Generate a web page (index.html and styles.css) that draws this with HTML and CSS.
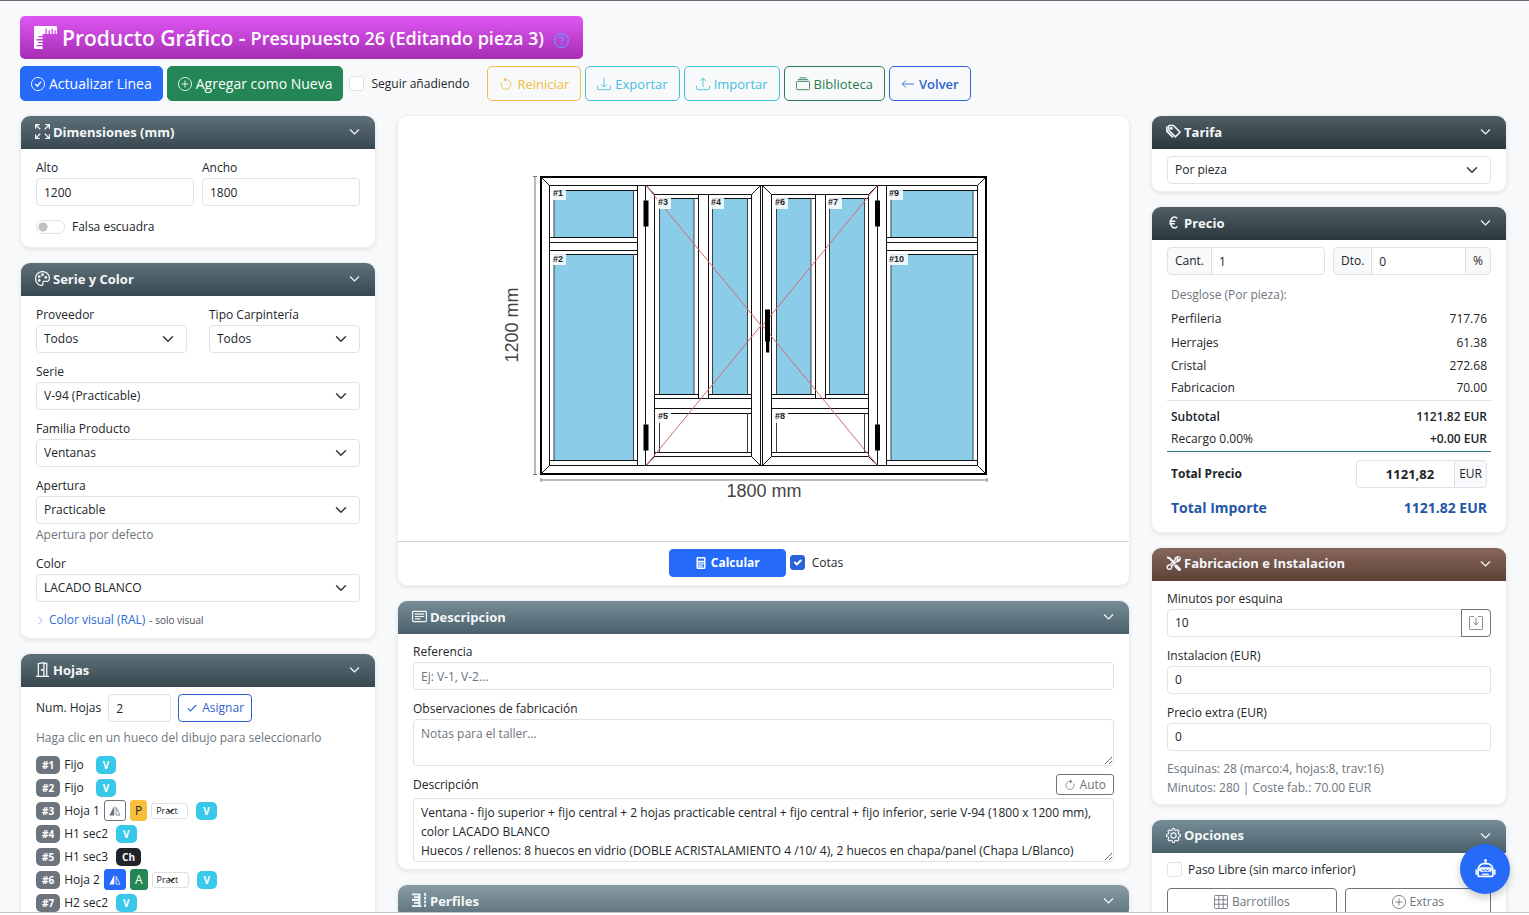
FILE: index.html
```html
<!DOCTYPE html>
<html lang="es">
<head>
<meta charset="utf-8">
<meta name="viewport" content="width=device-width, initial-scale=1">
<title>Producto Gráfico</title>
<link rel="stylesheet" href="styles.css">
</head>
<body>
<svg class="defs" aria-hidden="true">
  <symbol id="check-circle" viewBox="0 0 16 16"><circle cx="8" cy="8" r="7.5"/><path d="M5 8l2.3 2.5L11.4 5.400" stroke-width="1.500"/></symbol>
  <symbol id="plus-circle" viewBox="0 0 16 16"><circle cx="8" cy="8" r="7.500"/><path d="M8 4v8M4 8h8"/></symbol>
  <symbol id="question" viewBox="0 0 16 16"><circle cx="8" cy="8" r="7.400" stroke-width="1.300"/><path d="M5.800 6.200c0-1.500 1-2.100 2.200-2.100s2.200.7 2.200 2c0 1.600-2.100 1.700-2.100 3.600" stroke-width="1.500"/><circle class="solid" cx="8.100" cy="11.700" r=".95"/></symbol>
  <symbol id="reset" viewBox="0 0 16 16"><path d="M8 3a5.500 5.500 0 1 1-4.900 3"/><path class="solid" d="M8 .5v5L5 3z"/></symbol>
  <symbol id="refresh" viewBox="0 0 16 16"><path d="M8 3a5.500 5.500 0 1 0 4.900 3"/><path class="solid" d="M8 .5v5L11 3z"/></symbol>
  <symbol id="download" viewBox="0 0 16 16"><path d="M.5 10v2.500a2 2 0 0 0 2 2h11a2 2 0 0 0 2-2V10M8 1v10.500M4.800 8.400L8 11.500l3.200-3.100"/></symbol>
  <symbol id="upload" viewBox="0 0 16 16"><path d="M.5 10v2.500a2 2 0 0 0 2 2h11a2 2 0 0 0 2-2V10M8 11.500V1.300M4.800 4.500L8 1.300l3.200 3.200"/></symbol>
  <symbol id="library" viewBox="0 0 16 16"><rect x=".5" y="5" width="15" height="9.500" rx="1.200"/><path d="M2 3h12M4 1h8"/></symbol>
  <symbol id="arrow-left" viewBox="0 0 16 16"><path d="M15 8H1.500M5.500 4l-4 4 4 4"/></symbol>
  <symbol id="chevron" viewBox="0 0 16 16"><path d="M1.500 5L8 11.500 14.500 5" stroke-width="1.800"/></symbol>
  <symbol id="chevron-right" viewBox="0 0 16 16"><path d="M5 2l6 6-6 6"/></symbol>
  <symbol id="check" viewBox="0 0 16 16"><path d="M2.500 8.500l3.500 3.500L13.500 4" stroke-width="1.500"/></symbol>
  <symbol id="rulers" viewBox="0 0 16 16"><path class="solid" d="M1 0h14a1 1 0 0 1 1 1v4.500h-.9V3h-.9v2.500h-1.100V1.800h-.9v3.700h-1.200V3h-.9v2.500H8.900V1.800H8v3.700H6V7H3v.9h3v1.200H1.800v.9H6v1.100H3v.9h3v1.200H1.800v.9H6V16H1a1 1 0 0 1-1-1V1a1 1 0 0 1 1-1z"/></symbol>
  <symbol id="expand" viewBox="0 0 16 16"><path d="M.6 5V.6H5M11 .6h4.400V5M15.400 11v4.400H11M5 15.400H.6V11M.6.6l5 5M15.400.6l-5 5M15.400 15.400l-5-5M.6 15.400l5-5" stroke-width="1.300"/></symbol>
  <symbol id="palette" viewBox="0 0 16 16"><path d="M8 .6C3.800.6.6 3.700.6 7.800S3.400 15.400 6.700 15.400c2.700 0 1-2.600 2-4 1.100-1.500 3.100.2 5-.5 1.100-.4 1.700-1.500 1.700-3.100C15.400 3.700 12.200.6 8 .6z" stroke-width="1.300"/><g class="solid"><circle cx="8" cy="4" r="1.500"/><circle cx="4.500" cy="6" r="1.500"/><circle cx="4.500" cy="10" r="1.500"/><circle cx="11.600" cy="6.800" r="1.500"/></g></symbol>
  <symbol id="door" viewBox="0 0 16 16"><path d="M1 15.400h14M3.600 15V1.700L9.500.7V15M9.500 1.500h3V15" stroke-width="1.400"/><circle class="solid" cx="7.400" cy="8.500" r="1.200"/></symbol>
  <symbol id="calc" viewBox="0 0 16 16"><path class="solid" fill-rule="evenodd" d="M3.500 0h9A1.500 1.500 0 0 1 14 1.500v13a1.500 1.500 0 0 1-1.500 1.500h-9A1.500 1.500 0 0 1 2 14.500v-13A1.500 1.500 0 0 1 3.500 0zM4 2v3h8V2zM4 7v1.500h2V7zm3 0v1.500h2V7zm3 0v1.500h2V7zM4 9.700v1.500h2V9.700zm3 0v1.500h2V9.700zm3 0V14h2V9.700zM4 12.500V14h2v-1.500zm3 0V14h2v-1.500z"/></symbol>
  <symbol id="card-text" viewBox="0 0 16 16"><rect x=".6" y="2.600" width="14.800" height="10.800" rx="1" stroke-width="1.300"/><path d="M3 5.500h10M3 8h10M3 10.500h6" stroke-width="1.300"/></symbol>
  <symbol id="profiles" viewBox="0 0 16 16"><path d="M0 1.500h9M2 4.500h7M0 7.500h7M2 10.500h7M0 14h10M8 1v13" stroke-width="2"/><path d="M14 0v16" stroke-width="2" stroke-dasharray="3 1"/></symbol>
  <symbol id="tags" viewBox="0 0 16 16"><path d="M3 2.200v4.500l7 7 5-5-7-7H3.500z" stroke-width="1.600"/><path d="M1 2.500v5.300l6.500 6.500" stroke-width="1.800"/><circle class="solid" cx="5.700" cy="4.700" r="1.500"/></symbol>
  <symbol id="euro" viewBox="0 0 16 16"><path d="M12 3.800C11.200 2.700 10.200 2.200 9 2.200c-2.500 0-3.800 2.300-3.800 5.800s1.300 5.800 3.800 5.800c1.200 0 2.200-.5 3-1.600M3.500 6.700H10M3.500 9.300h5.800" stroke-width="1.700"/></symbol>
  <symbol id="tools" viewBox="0 0 16 16"><path d="M1.200 1.200l2.800 1.300 5 5.300" stroke-width="2.200"/><path d="M14.500 3.500l-2.300.8-.6-2 1.700-1.200c-2-.7-4 .9-3.500 3l-5.500 5.600c-2.300-.5-3.900 1.900-2.500 3.600 1.700 2 5 .3 4.100-2.300l5.500-5.300c2.200.6 3.900-1.100 3.700-3.200z" stroke-width="1.500"/><path d="M10.500 10.500l3.700 3.700" stroke-width="3.400" stroke-linecap="round"/></symbol>
  <symbol id="gear" viewBox="0 0 16 16"><path d="M6.600 2.200L7 .6h2l.4 1.600 1.500.6 1.500-.9 1.500 1.500-.9 1.500.6 1.500 1.800.6v2l-1.800.5-.6 1.500.9 1.500-1.500 1.500-1.500-.9-1.500.6-.4 1.700H7l-.4-1.700-1.500-.6-1.500.9-1.500-1.500.9-1.500-.6-1.500L.6 9V7l1.800-.6L3 4.900l-.9-1.500 1.500-1.500 1.500.9z" stroke-linejoin="round" stroke-width="1.200"/><circle cx="8" cy="8" r="2.800" stroke-width="1.200"/></symbol>
  <symbol id="save-in" viewBox="0 0 16 16"><path d="M5.500.5h-4a1 1 0 0 0-1 1v13a1 1 0 0 0 1 1h13a1 1 0 0 0 1-1v-13a1 1 0 0 0-1-1h-4M8 2v8M5 7.200l3 3 3-3"/></symbol>
  <symbol id="grid" viewBox="0 0 16 16"><rect x=".5" y=".5" width="15" height="15" rx="1"/><path d="M.5 5.500h15M.5 10.500h15M5.500.5v15M10.500.5v15"/></symbol>
  <symbol id="mirror" viewBox="0 0 16 16"><path class="solid" d="M7 1v13H.5z"/><path d="M9.500 3v10.500h5.200z"/></symbol>
  <symbol id="robot" viewBox="0 0 16 16"><path d="M8 1v2.500M1 8v4M15 8v4" stroke-width="1.300"/><circle class="solid" cx="8" cy="1" r="1"/><path d="M4.500 13.300H3.400a1 1 0 0 1-1-1V8A4.500 4.500 0 0 1 6.900 3.600h2.200A4.500 4.500 0 0 1 13.600 8v4.300a1 1 0 0 1-1 1H3.400" stroke-width="1.300"/><path class="solid" fill-rule="evenodd" d="M4.800 6.200h6.400a1.800 1.800 0 0 1 0 3.600H4.800a1.800 1.800 0 0 1 0-3.600zM5 7.400l1.500 1.200L8 7.600l1.500 1L11 7.400v.8L9.500 9.300 8 8.400l-1.500.9L5 8.200z"/><path d="M5.500 11.600h5" stroke-width="1"/></symbol>
</svg>

<main class="app">
  <h1 class="title"><svg class="icon title-icon"><use href="#rulers"/></svg><span>Producto Gráfico -</span><span class="subtitle">Presupuesto 26 (Editando pieza 3)</span><a class="help" href="#" aria-label="Ayuda"><svg class="icon"><use href="#question"/></svg></a></h1>

  <div class="toolbar">
    <button class="btn primary" type="button"><svg class="icon"><use href="#check-circle"/></svg>Actualizar Linea</button>
    <button class="btn success" type="button"><svg class="icon"><use href="#plus-circle"/></svg>Agregar como Nueva</button>
    <label class="check keep"><input type="checkbox">Seguir añadiendo</label>
    <button class="btn warning" type="button"><svg class="icon"><use href="#reset"/></svg>Reiniciar</button>
    <button class="btn info" type="button"><svg class="icon"><use href="#download"/></svg>Exportar</button>
    <button class="btn info" type="button"><svg class="icon"><use href="#upload"/></svg>Importar</button>
    <button class="btn outline-success" type="button"><svg class="icon"><use href="#library"/></svg>Biblioteca</button>
    <a class="btn back" href="#"><svg class="icon"><use href="#arrow-left"/></svg>Volver</a>
  </div>

  <div class="columns">
    <div class="column">
      <section class="card">
        <h2 class="card-head slate"><svg class="icon"><use href="#expand"/></svg>Dimensiones (mm)<svg class="icon toggle"><use href="#chevron"/></svg></h2>
        <div class="card-body roomy">
          <div class="pair">
            <div class="field"><label for="alto">Alto</label><input class="control" id="alto" value="1200"></div>
            <div class="field"><label for="ancho">Ancho</label><input class="control" id="ancho" value="1800"></div>
          </div>
          <label class="switch"><input type="checkbox" role="switch">Falsa escuadra</label>
        </div>
      </section>

      <section class="card">
        <h2 class="card-head slate"><svg class="icon"><use href="#palette"/></svg>Serie y Color<svg class="icon toggle"><use href="#chevron"/></svg></h2>
        <div class="card-body roomy">
          <div class="pair wide">
            <div class="field"><label for="prov">Proveedor</label><select class="control" id="prov"><option>Todos</option></select></div>
            <div class="field"><label for="tipo">Tipo Carpintería</label><select class="control" id="tipo"><option>Todos</option></select></div>
          </div>
          <div class="field"><label for="serie">Serie</label><select class="control" id="serie"><option>V-94 (Practicable)</option></select></div>
          <div class="field"><label for="familia">Familia Producto</label><select class="control" id="familia"><option>Ventanas</option></select></div>
          <div class="field"><label for="apertura">Apertura</label><select class="control" id="apertura"><option>Practicable</option></select><p class="muted hint">Apertura por defecto</p></div>
          <div class="field"><label for="color">Color</label><select class="control" id="color"><option>LACADO BLANCO</option></select></div>
          <p class="ral"><svg class="icon"><use href="#chevron-right"/></svg><a href="#">Color visual (RAL)</a><small>- solo visual</small></p>
        </div>
      </section>

      <section class="card">
        <h2 class="card-head slate"><svg class="icon"><use href="#door"/></svg>Hojas<svg class="icon toggle"><use href="#chevron"/></svg></h2>
        <div class="card-body leaves">
          <div class="assign"><label for="hojas">Num. Hojas</label><input class="control" id="hojas" value="2"><button class="btn small outline-primary" type="button"><svg class="icon"><use href="#check"/></svg>Asignar</button></div>
          <p class="muted">Haga clic en un hueco del dibujo para seleccionarlo</p>
          <ul class="leaf-list">
            <li><span class="badge">#1</span><span class="leaf-name">Fijo</span><span class="badge cyan">V</span></li>
            <li><span class="badge">#2</span><span class="leaf-name">Fijo</span><span class="badge cyan">V</span></li>
            <li><span class="badge">#3</span><span>Hoja 1</span><button class="mini" type="button" aria-label="Invertir hoja 1"><svg class="icon"><use href="#mirror"/></svg></button><button class="mini yellow" type="button">P</button><select class="mini-select" aria-label="Apertura hoja 1"><option>Pract</option></select><span class="badge cyan">V</span></li>
            <li><span class="badge">#4</span><span>H1 sec2</span><span class="badge cyan">V</span></li>
            <li><span class="badge">#5</span><span>H1 sec3</span><span class="badge black">Ch</span></li>
            <li><span class="badge">#6</span><span>Hoja 2</span><button class="mini blue" type="button" aria-label="Invertir hoja 2"><svg class="icon"><use href="#mirror"/></svg></button><button class="mini green" type="button">A</button><select class="mini-select" aria-label="Apertura hoja 2"><option>Pract</option></select><span class="badge cyan">V</span></li>
            <li><span class="badge">#7</span><span>H2 sec2</span><span class="badge cyan">V</span></li>
          </ul>
        </div>
      </section>
    </div>

    <div class="column middle">
      <section class="card viewer">
        <div class="canvas">
          <svg class="drawing" viewBox="500 155 528 347" role="img" aria-label="Ventana de 1800 por 1200 mm">
            <g class="glass">
              <path d="M554 190h79v47h-79zM554 254h79v206h-79zM659 198h35v196h-35zM712 198h35v196h-35zM776 198h35v196h-35zM829 198h35v196h-35zM891 190h82v47h-82zM891 254h82v206h-82z"/>
            </g>
            <path class="outer" d="M541 177h445v297H541z"/>
            <path class="line" d="M549.5 185.500h428v280h-428zM541 177l8.500 8.500M986 177l-8.500 8.500M541 474l8.500-8.500M986 474l-8.500-8.500"/>
            <path class="line" d="M637.500 185.500v280M645.500 185.500v280M877.500 185.500v280M886.500 185.500v280M760.500 185.500v280M762.500 185.500v280"/>
            <path class="line" d="M549.5 237.500h88M549.500 242.500h88M549.500 250.500h88M549.500 460.500h88M554 190.500h83M554 254.500h83M886.500 237.500h91M886.500 242.500h91M886.500 250.500h91M886.500 460.500h91M891 190.500h86M891 254.500h86"/>
            <path class="line" d="M654.500 194.500h97v262h-97zM646 185.500l8.500 9M760.500 185.500l-9 9M646 465.500l8.500-9M760.500 465.500l-9-9M771.500 194.500h97v262h-97zM762.500 185.500l9 9M877.500 185.500l-9 9M762.500 465.500l9-9M877.500 465.500l-9-9"/>
            <path class="line" d="M698.500 194.500v204M708.500 194.500v204M815.500 194.500v204M825.500 194.500v204M654.500 394.500h44M708.500 394.500h43M771.500 394.500h44M825.500 394.500h43M654.500 398.500h97M771.500 398.500h97M654.500 408.500h97M771.500 408.500h97M659.500 413.500h92M776.500 413.500h92M654.500 452.500h97M771.500 452.500h97M659 198.500h39M712 198.500h39M776 198.500h39M829 198.500h39"/>
            <path class="bead" d="M554 190v47M633.500 190v47M554 254v206M633.500 254v206M659.500 198v196M694 198v196M712.500 198v196M747.500 198v196M776.500 198v196M811 198v196M829.500 198v196M864.500 198v196M891 190v47M973 190v47M891 254v206M973 254v206M659.500 413v39M747.500 413v39M776.500 413v39M864.500 413v39"/>
            <path class="swing" d="M646 185.500l115 140-115 140M877.500 185.500l-115 140 115 140"/>
            <path class="metal" d="M643.500 200.500h5v26h-5zM643.500 424.500h5v26h-5zM875 200.500h5v26h-5zM875 424.500h5v26h-5zM765 309.500h5v32h-.7v11H766v-11h-1z"/>
            <g class="tag-bg"><path d="M552 188h14v12h-14zM552 253h14v12h-14zM657 197h14v12h-14zM710 197h14v12h-14zM657 411h14v12h-14zM774 197h14v12h-14zM828 197h14v12h-14zM774 411h14v12h-14zM889 188h14v12h-14zM889 253h19v12h-19z"/></g>
            <g class="tags"><text x="553" y="196">#1</text><text x="553" y="262">#2</text><text x="658" y="205">#3</text><text x="711" y="205">#4</text><text x="658" y="419">#5</text><text x="775" y="205">#6</text><text x="828" y="205">#7</text><text x="775" y="419">#8</text><text x="889" y="196">#9</text><text x="889" y="262">#10</text></g>
            <path class="dim" d="M535 177v297M533 176.500h4M533 474.500h4M541 480h446M541 478v4M987 478v4"/>
            <text class="dim-text" x="764" y="497">1800 mm</text>
            <text class="dim-text" transform="translate(518 325) rotate(-90)">1200 mm</text>
          </svg>
        </div>
        <div class="viewer-foot"><button class="btn small calc" type="button"><svg class="icon"><use href="#calc"/></svg>Calcular</button><label class="check"><input type="checkbox" checked>Cotas</label></div>
      </section>

      <section class="card">
        <h2 class="card-head steel"><svg class="icon"><use href="#card-text"/></svg>Descripcion<svg class="icon toggle"><use href="#chevron"/></svg></h2>
        <div class="card-body">
          <div class="field"><label for="ref">Referencia</label><input class="control" id="ref" placeholder="Ej: V-1, V-2..."></div>
          <div class="field"><label for="obs">Observaciones de fabricación</label><textarea class="control area" id="obs" rows="2" placeholder="Notas para el taller..."></textarea></div>
          <div class="field"><div class="label-row"><label for="desc">Descripción</label><button class="btn tiny" type="button"><svg class="icon"><use href="#refresh"/></svg>Auto</button></div><textarea class="control area tall" id="desc" rows="3">Ventana - fijo superior + fijo central + 2 hojas practicable central + fijo central + fijo inferior, serie V-94 (1800 x 1200 mm), color LACADO BLANCO
Huecos / rellenos: 8 huecos en vidrio (DOBLE ACRISTALAMIENTO 4 /10/ 4), 2 huecos en chapa/panel (Chapa L/Blanco)</textarea></div>
        </div>
      </section>

      <section class="card">
        <h2 class="card-head fog"><svg class="icon"><use href="#profiles"/></svg>Perfiles<svg class="icon toggle"><use href="#chevron"/></svg></h2>
      </section>
    </div>

    <div class="column">
      <section class="card">
        <h2 class="card-head ink"><svg class="icon"><use href="#tags"/></svg>Tarifa<svg class="icon toggle"><use href="#chevron"/></svg></h2>
        <div class="card-body"><select class="control" aria-label="Tarifa"><option>Por pieza</option></select></div>
      </section>

      <section class="card">
        <h2 class="card-head ink"><svg class="icon"><use href="#euro"/></svg>Precio<svg class="icon toggle"><use href="#chevron"/></svg></h2>
        <div class="card-body price">
          <div class="pair">
            <div class="group"><label class="addon" for="cant">Cant.</label><input class="control" id="cant" value="1"></div>
            <div class="group"><label class="addon" for="dto">Dto.</label><input class="control" id="dto" value="0"><span class="addon">%</span></div>
          </div>
          <table class="costs">
            <tbody>
              <tr class="muted lead"><td colspan="2">Desglose (Por pieza):</td></tr>
              <tr class="lead"><td>Perfileria</td><td>717.76</td></tr>
              <tr><td>Herrajes</td><td>61.38</td></tr>
              <tr><td>Cristal</td><td>272.68</td></tr>
              <tr><td>Fabricacion</td><td>70.00</td></tr>
            </tbody>
            <tbody class="sub">
              <tr><th scope="row">Subtotal</th><td>1121.82 EUR</td></tr>
              <tr><td>Recargo 0.00%</td><td>+0.00 EUR</td></tr>
            </tbody>
          </table>
          <div class="total"><label for="total">Total Precio</label><div class="group"><input class="control" id="total" value="1121,82"><span class="addon">EUR</span></div></div>
          <div class="grand"><span>Total Importe</span><span>1121.82 EUR</span></div>
        </div>
      </section>

      <section class="card">
        <h2 class="card-head brown"><svg class="icon"><use href="#tools"/></svg>Fabricacion e Instalacion<svg class="icon toggle"><use href="#chevron"/></svg></h2>
        <div class="card-body">
          <div class="field"><label for="min">Minutos por esquina</label><div class="group"><input class="control" id="min" value="10"><button class="addon-btn" type="button" aria-label="Guardar minutos"><svg class="icon"><use href="#save-in"/></svg></button></div></div>
          <div class="field"><label for="inst">Instalacion (EUR)</label><input class="control" id="inst" value="0"></div>
          <div class="field"><label for="extra">Precio extra (EUR)</label><input class="control" id="extra" value="0"></div>
          <p class="muted summary">Esquinas: 28 (marco:4, hojas:8, trav:16)<br>Minutos: 280 | Coste fab.: 70.00 EUR</p>
        </div>
      </section>

      <section class="card">
        <h2 class="card-head steel"><svg class="icon"><use href="#gear"/></svg>Opciones<svg class="icon toggle"><use href="#chevron"/></svg></h2>
        <div class="card-body">
          <label class="check options-check"><input type="checkbox">Paso Libre (sin marco inferior)</label>
          <div class="actions"><button class="btn small gray" type="button"><svg class="icon"><use href="#grid"/></svg>Barrotillos</button><button class="btn small gray" type="button"><svg class="icon"><use href="#plus-circle"/></svg>Extras</button></div>
        </div>
      </section>
    </div>
  </div>
</main>
<button class="chat" type="button" aria-label="Asistente"><svg class="icon"><use href="#robot"/></svg></button>
</body>
</html>
```
FILE: styles.css
```css
* { box-sizing: border-box; }

body {
  margin: 0;
  height: 100vh;
  overflow: hidden;
  background: #fff;
  color: #212529;
  font: 12px/20px "Open Sans", "Noto Sans", sans-serif;
}

h1, h2, p, ul { margin: 0; padding: 0; }
button, input, select, textarea { font: inherit; color: inherit; margin: 0; }
a { color: #2b6bd6; text-decoration: none; }

.defs { display: none; }

.icon {
  width: 14px;
  height: 14px;
  flex: none;
  fill: none;
  stroke: currentColor;
  overflow: visible;
}
.solid { fill: currentColor; stroke: none; }

.app {
  height: calc(100vh - 2px);
  overflow: hidden;
  padding: 15px 22px 0 20px;
  border-top: 1px solid #6c6b73;
  border-bottom: 1px solid #c4c6ca;
  background: #f8f9fb;
}

/* Page title */
.title {
  display: flex;
  align-items: center;
  gap: 5px;
  width: fit-content;
  height: 43px;
  padding: 0 14px;
  border-radius: 5px;
  background: linear-gradient(#df57f3, #a62db4);
  color: #fff;
  font-size: 21px;
  font-weight: 600;
  white-space: nowrap;
}
.title-icon { width: 23px; height: 23px; }
.subtitle { font-size: 18px; }
.help { display: flex; margin: 5px 0 0 5px; color: #6f8cff; }
.help .icon { width: 15px; height: 15px; }

/* Toolbar */
.toolbar {
  display: flex;
  flex-wrap: wrap;
  align-items: center;
  gap: 4px;
  margin: 7px 0 14px;
}
.btn {
  display: inline-flex;
  align-items: center;
  justify-content: center;
  gap: 4px;
  height: 35px;
  padding: 0 11px;
  border: 1px solid currentColor;
  border-radius: 5px;
  background: transparent;
  font-size: 13px;
  white-space: nowrap;
}
.primary, .calc { background: #256af8; border-color: #256af8; color: #fff; }
.success { background: #238654; border-color: #238654; color: #fff; }
.primary, .success { padding: 0 10px; font-size: 14px; }
.warning { color: #f3bc45; }
.info { color: #45bfdc; }
.outline-success { color: #2a7d50; }
.back, .outline-primary { color: #2f62d0; }
.back { font-weight: 600; }
.small { height: 28px; padding: 0 7px; border-radius: 4px; font-size: 12px; }
.tiny { height: 21px; padding: 0 7px; border-radius: 3px; font-size: 12px; color: #6c757d; }
.gray { color: #6c757d; }
.calc { width: 117px; font-weight: 700; font-size: 12px; }
.calc .icon, .tiny .icon, .outline-primary .icon { width: 12px; height: 12px; }

.check { display: flex; align-items: center; gap: 7px; }
.check input {
  appearance: none;
  width: 15px;
  height: 15px;
  border: 1px solid #dee2e6;
  border-radius: 3px;
  background: #fff;
}
.check input:checked {
  border-color: #2b62d9;
  background: #2b62d9 url("data:image/svg+xml,%3Csvg xmlns='http://www.w3.org/2000/svg' viewBox='0 0 20 20'%3E%3Cpath d='M6 10l3 3 6-6' fill='none' stroke='%23fff' stroke-width='3' stroke-linecap='round' stroke-linejoin='round'/%3E%3C/svg%3E") center / contain;
}
.keep { margin: 0 14px 0 2px; }

/* Columns and cards */
.columns {
  display: grid;
  grid-template-columns: repeat(4, minmax(0, 1fr));
  align-items: start;
  gap: 21px;
}
.column { display: flex; flex-direction: column; gap: 14px; min-width: 0; }
.middle { grid-column: span 2; }
.card {
  border: 1px solid #eceef1;
  border-radius: 10px;
  background: #fff;
  box-shadow: 0 2px 4px rgba(0, 0, 0, .08);
  overflow: hidden;
}
.card-head {
  display: flex;
  align-items: center;
  gap: 3px;
  height: 33px;
  padding: 0 15px 2px 14px;
  border-radius: 5px 5px 0 0;
  color: #f4f7f8;
  font-size: 13px;
  font-weight: 700;
}
.card-head .icon { width: 15px; height: 15px; }
.card-head .toggle { width: 11px; height: 11px; margin-left: auto; }
.slate { background: linear-gradient(#5f7178, #374850); }
.steel { background: linear-gradient(#768d97, #4a616b); }
.fog { background: linear-gradient(#889ca4, #5b707a); }
.ink { background: linear-gradient(#505e65, #2b373d); }
.brown { background: linear-gradient(#88675c, #5d4137); }
.card-body { display: flex; flex-direction: column; gap: 8px; padding: 7px 15px; }
.roomy { padding: 8px 15px; }
.pair { display: grid; grid-template-columns: 1fr 1fr; gap: 8px; }
.pair.wide { gap: 22px; }

/* Fields */
.field { display: flex; flex-direction: column; min-width: 0; }
.field label { padding-top: 1px; }
.control {
  width: 100%;
  min-width: 0;
  height: 28px;
  padding: 0 7px;
  border: 1px solid #dee2e6;
  border-radius: 4px;
  background: #fff;
}
.control::placeholder { color: #6c757d; }
select.control {
  appearance: none;
  padding-right: 28px;
  background: #fff url("data:image/svg+xml,%3Csvg xmlns='http://www.w3.org/2000/svg' viewBox='0 0 16 16'%3E%3Cpath d='M2 5l6 6 6-6' fill='none' stroke='%23343a40' stroke-width='2' stroke-linecap='round' stroke-linejoin='round'/%3E%3C/svg%3E") no-repeat right 12px center / 12px;
}
.area { display: block; height: 47px; padding: 4px 7px; line-height: 19px; resize: vertical; }
.tall { height: 64px; overflow: hidden; }
.label-row { display: flex; align-items: center; justify-content: space-between; margin-bottom: 3px; }
.muted { color: #6c757d; }
.hint { padding-top: 1px; }
.switch { display: flex; align-items: center; gap: 7px; margin: 3px 0 2px; }
.switch input {
  appearance: none;
  width: 29px;
  height: 14px;
  border: 1px solid #dee2e6;
  border-radius: 7px;
  background: radial-gradient(circle at 6px 6px, #bfbfbf 4px, #fff 5px);
}
.ral { display: flex; align-items: center; gap: 4px; }
.ral .icon { width: 9px; height: 9px; color: #2b6bd6; }
.ral small { font-size: 10px; color: #495057; }

/* Leaves */
.leaves { gap: 6px; }
.leaves .muted { line-height: 19px; }
.assign { display: flex; align-items: center; gap: 7px; }
.assign .control { width: 63px; }
.leaf-list { list-style: none; }
.leaf-list li { display: flex; align-items: center; gap: 4px; height: 23px; }
.badge {
  padding: 0 6px;
  border-radius: 5px;
  background: #6c757d;
  color: #fff;
  font-size: 10px;
  font-weight: 700;
  line-height: 18px;
}
.leaf-name { margin-right: 4px; }
.cyan, .black { margin-left: 4px; }
.cyan { padding: 0 7px; background: #38c8ea; }
.black { background: #212529; }
.mini {
  display: inline-flex;
  align-items: center;
  height: 21px;
  padding: 0 4px;
  border: 1px solid #6c757d;
  border-radius: 3px;
  background: #fff;
  color: #6c757d;
}
.mini .icon { width: 12px; height: 12px; }
.yellow { border-color: #f9bf3b; background: #f9bf3b; color: #212529; }
.blue { border-color: #256af8; background: #256af8; color: #fff; }
.green { border-color: #238654; background: #238654; color: #fff; }
.mini-select {
  appearance: none;
  width: 37px;
  height: 16px;
  padding: 0 0 0 4px;
  border: 1px solid #dee2e6;
  border-radius: 3px;
  background: #fff url("data:image/svg+xml,%3Csvg xmlns='http://www.w3.org/2000/svg' viewBox='0 0 16 16'%3E%3Cpath d='M2 5l6 6 6-6' fill='none' stroke='%23343a40' stroke-width='2'/%3E%3C/svg%3E") no-repeat 14px center / 9px;
  font-size: 9px;
  line-height: 14px;
}

/* Drawing */
.canvas { display: flex; justify-content: center; align-items: center; min-height: 425px; }
.drawing { width: 528px; max-width: 100%; height: auto; }
.glass { fill: #8bcde8; }
.outer { fill: none; stroke: #000; stroke-width: 2; }
.line { fill: none; stroke: #111; }
.bead { fill: none; stroke: #33444c; }
.swing { fill: none; stroke: #d9676f; }
.metal { fill: #000; }
.tag-bg { fill: #fff; fill-opacity: .85; }
.tags { fill: #222; font: bold 9px "Liberation Sans", Arial, sans-serif; }
.dim { fill: none; stroke: #777; }
.dim-text { fill: #444; font: 18px "Liberation Sans", Arial, sans-serif; text-anchor: middle; }
.viewer-foot {
  display: flex;
  justify-content: center;
  align-items: center;
  gap: 4px;
  height: 44px;
  border-top: 1px solid #cfd2d5;
  padding: 0 15px 2px 0;
}

/* Price */
.group { display: flex; min-width: 0; }
.group .control { flex: 1; }
.group > :not(:first-child) { margin-left: -1px; border-top-left-radius: 0; border-bottom-left-radius: 0; }
.group > :not(:last-child) { border-top-right-radius: 0; border-bottom-right-radius: 0; }
.addon {
  display: flex;
  align-items: center;
  padding: 0 7px;
  border: 1px solid #dee2e6;
  border-radius: 4px;
  background: #f8f9fa;
}
.addon-btn {
  display: flex;
  align-items: center;
  padding: 0 7px;
  border: 1px solid #6c757d;
  border-radius: 4px;
  background: #fff;
  color: #6c757d;
}
.costs { width: 100%; border-collapse: collapse; border-bottom: 1px solid #2c7a86; }
.costs tr { height: 23px; }
.costs .lead { height: 24px; }
.costs td, .costs th { padding: 0 4px; text-align: left; }
.costs td:nth-child(2) { text-align: right; }
.sub { border-top: 1px solid #dee2e6; }
.sub th, .sub td:nth-child(2) { font-weight: 600; }
.sub tr:first-child { height: 28px; }
.sub tr:first-child > * { padding-top: 5px; }
.total, .grand { display: flex; align-items: center; justify-content: space-between; padding: 0 4px; font-weight: 700; }
.total .group { width: 131px; }
.total .control { padding-right: 20px; text-align: right; font-size: 13px; font-weight: 700; }
.total .addon { padding: 0 4px; font-weight: 400; }
.grand { padding-bottom: 5px; color: #2456a6; font-size: 14px; line-height: 24px; }
.summary { line-height: 19px; }
.actions { display: flex; gap: 8px; }
.actions .btn { flex: auto; }
.options-check { gap: 6px; }

.chat {
  position: fixed;
  right: 19px;
  bottom: 21px;
  display: flex;
  align-items: center;
  justify-content: center;
  width: 50px;
  height: 50px;
  border: 0;
  border-radius: 50%;
  background: #256af8;
  color: #fff;
  box-shadow: 0 4px 8px rgba(0, 0, 0, .2);
}
.chat .icon { width: 21px; height: 21px; }
```
